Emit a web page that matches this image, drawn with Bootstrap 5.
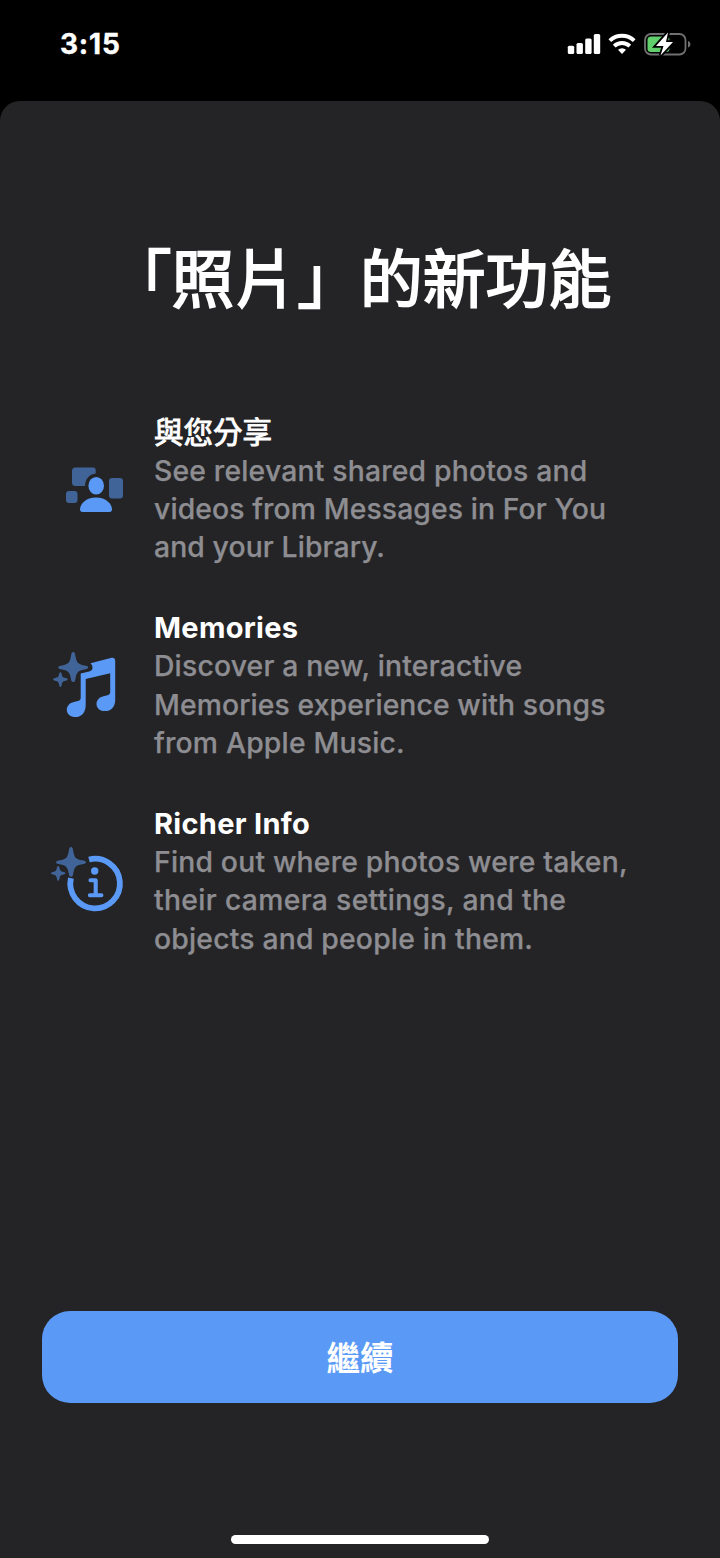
<!DOCTYPE html>
<html lang="zh-Hant" data-bs-theme="dark">
<head>
<meta charset="utf-8">
<meta name="viewport" content="width=device-width, initial-scale=1">
<title>「照片」的新功能</title>
<link rel="stylesheet" href="https://cdn.jsdelivr.net/npm/bootstrap@5.3.0/dist/css/bootstrap.min.css">
<style>
  :root { --accent: #5a9af6; --accent-dim: #416498; --sheet: #242426; }
  body { background: #000; color: #fff; font-family: Inter, "Noto Sans CJK TC", sans-serif; }
  .screen { height: 1558px; overflow: hidden; }
  .status-bar { height: 101px; padding: 0 29px 14px 60px; }
  .clock { font-size: 28px; font-weight: 700; letter-spacing: .8px; line-height: 1; -webkit-text-stroke: .4px #fff; }
  .sheet { background: var(--sheet); border-radius: 20px 20px 0 0; }
  .headline { margin-top: 127px; font: 400 62.800px/94px "Noto Sans CJK TC", sans-serif; -webkit-text-stroke: 1.900px #fff; }
  .features { margin-top: 91.500px; padding-left: 42px; gap: 42.400px; }
  .feature { height: 153.200px; }
  .feature-icon { width: 112px; flex: none; }
  .feature-icon svg { display: block; }
  .feature-text { font-size: 28.300px; line-height: 38.300px; }
  .feature-text h2 { height: 38.300px; font-size: 29px; line-height: 38.300px; font-weight: 700; letter-spacing: .3px; }
  .feature-text .heading-zh { font: 400 29.500px/32.300px "Noto Sans CJK TC", sans-serif; letter-spacing: 0; -webkit-text-stroke: .9px #fff; }
  .feature-text p { color: #8d8d92; font-weight: 500; -webkit-text-stroke: .25px #8d8d92; }
  .feature-text span { display: block; white-space: nowrap; letter-spacing: .2px; }
  .feature-text .snug { letter-spacing: .12px; }
  .feature-text .airy { letter-spacing: .33px; }
  .btn-continue { --bs-btn-bg: var(--accent); --bs-btn-color: #fff; height: 92px; border: 0; border-radius: 28px; font: 700 33.500px/1 "Noto Sans CJK TC", sans-serif; margin: 0 42px 132px; padding: 0 0 3px; }
  .home-bar { width: 258px; height: 9px; margin-bottom: 14px; }
</style>
</head>
<body>
<div class="screen d-flex flex-column">
  <header class="status-bar d-flex align-items-center justify-content-between">
    <div class="clock">3:15</div>
    <svg width="124" height="30" viewBox="567 28 124 30" aria-hidden="true">
      <g fill="#fff">
        <rect x="567.800" y="44.800" width="6.400" height="8.200" rx="1.500"/>
        <rect x="576.500" y="42" width="6.400" height="11" rx="1.500"/>
        <rect x="585.200" y="37.500" width="6.400" height="15.500" rx="1.500"/>
        <rect x="593.800" y="33" width="6.400" height="20" rx="1.500"/>
        <path d="M622 53l-4-4.200a6 6 0 0 1 8 0z"/>
      </g>
      <g fill="none" stroke="#fff" stroke-width="3.900">
        <path d="M609.800 39.600a17.600 17.600 0 0 1 24.400 0"/>
        <path d="M614.200 45.200a11.200 11.200 0 0 1 15.600 0"/>
      </g>
      <rect x="645" y="33" width="40.500" height="20.500" rx="6" fill="none" stroke="#707070" stroke-width="1.800"/>
      <path d="M688 40c3.200.8 3.200 5.700 0 6.500z" fill="#707070"/>
      <rect x="647.500" y="35.500" width="22" height="15.500" rx="3.500" fill="#61cf6b"/>
      <path d="M668 31.500L656 45h7.500l-3 9.500L673 41h-7z" fill="#fff" stroke="#000" stroke-width="3.600" paint-order="stroke"/>
    </svg>
  </header>
  <main class="sheet flex-grow-1 d-flex flex-column">
    <h1 class="headline text-center mb-0">「照片」的新功能</h1>
    <div class="features d-flex flex-column">
      <section class="feature d-flex">
        <div class="feature-icon">
          <svg width="112" height="152" viewBox="42 414 112 152" aria-hidden="true">
            <g fill="#416498">
              <path d="M75.500 467.500h17.500a3 3 0 0 1 2.700 3.300v2.700c-6.500.5-10.700 6-10.700 12.500h-9.500a3.500 3.500 0 0 1-3.500-3.500v-11.500a3.500 3.500 0 0 1 3.500-3.500z"/>
              <rect x="109" y="478" width="14" height="20.500" rx="3"/>
              <rect x="66" y="491" width="11.500" height="12" rx="3"/>
            </g>
            <g fill="#5a9af6">
              <ellipse cx="96.200" cy="485.800" rx="7.800" ry="8.800"/>
              <path d="M82.500 512c-1.500 0-2.500-1-2.500-2.500C80 504 86 497.500 96 497.500s16 6.500 16 12c0 1.500-1 2.500-2.500 2.500z"/>
            </g>
          </svg>
        </div>
        <div class="feature-text">
          <h2 class="heading-zh mb-0">與您分享</h2>
          <p class="mb-0"><span>See relevant shared photos and</span><span class="snug">videos from Messages in For You</span><span class="snug">and your Library.</span></p>
        </div>
      </section>
      <section class="feature d-flex">
        <div class="feature-icon">
          <svg width="112" height="152" viewBox="42 609.100 112 152" aria-hidden="true">
            <path d="M90.500 663.300l20.300-5.200c2.800-.7 4.400.4 4.400 3.200V700c0 7-4.200 11.200-10.200 11.200-5 0-8.500-3.100-8.500-7.200s3.200-7.200 8-8l3-.7c2-.5 2.700-1.300 2.700-3.200V673.300L85.700 679v26c0 7.500-4.400 12.200-10.200 12.200-5 0-8.700-3.300-8.700-7.400s3.200-7.100 8-8l3.200-.8c2-.5 2.700-1.300 2.700-3.200V673.700l8.500-2.100c3.800-.9 4.500-5 1.300-8.300z" fill="#5a9af6"/>
            <g fill="#416498">
              <path d="M73.200 652.200c1.600 0 1.900 2.100 2.200 4 1.200 6.500 2.400 8.200 9 9.400 2 .4 3.800.6 3.800 2s-1.800 1.600-3.800 2c-6.600 1.200-7.800 2.900-9 9.400-.3 1.900-.6 3-2.200 3s-1.900-1.100-2.200-3c-1.200-6.500-2.400-8.200-9-9.400-2-.4-3.800-.6-3.800-2s1.800-1.600 3.800-2c6.600-1.200 7.800-2.900 9-9.400.3-1.900.6-4 2.200-4z" stroke="#242426" stroke-width="2" paint-order="stroke"/>
              <path d="M60.400 672.300c.9 0 1.100.9 1.300 1.800.6 3 1 3.500 4 4.100 1 .2 1.900.5 1.900 1.300s-.9 1.100-1.900 1.300c-3 .6-3.400 1.100-4 4.100-.2.900-.4 2.100-1.300 2.100s-1.100-1.200-1.300-2.100c-.6-3-1-3.500-4-4.100-1-.2-1.900-.5-1.900-1.300s.9-1.100 1.900-1.300c3-.6 3.400-1.100 4-4.100.2-.9.400-1.800 1.300-1.800z"/>
            </g>
          </svg>
        </div>
        <div class="feature-text">
          <h2 class="mb-0">Memories</h2>
          <p class="mb-0"><span>Discover a new, interactive</span><span class="snug">Memories experience with songs</span><span>from Apple Music.</span></p>
        </div>
      </section>
      <section class="feature d-flex">
        <div class="feature-icon">
          <svg width="112" height="152" viewBox="42 805 112 152" aria-hidden="true">
            <path d="M89 859.500A24.800 24.800 0 1 1 70.900 878.200" fill="none" stroke="#5a9af6" stroke-width="5.800"/>
            <circle cx="94.700" cy="871" r="3.700" fill="#5a9af6"/>
            <path d="M90.500 880.200h5.200v15.100M89.900 895.300h11.500" fill="none" stroke="#5a9af6" stroke-width="4.100" stroke-linecap="round" stroke-linejoin="round"/>
            <g fill="#416498" transform="translate(-2.200 194.700)">
              <path d="M73.200 652.200c1.600 0 1.900 2.100 2.200 4 1.200 6.500 2.400 8.200 9 9.400 2 .4 3.800.6 3.800 2s-1.800 1.600-3.800 2c-6.600 1.200-7.800 2.900-9 9.400-.3 1.900-.6 3-2.200 3s-1.900-1.100-2.200-3c-1.200-6.500-2.400-8.200-9-9.400-2-.4-3.800-.6-3.800-2s1.800-1.600 3.800-2c6.600-1.200 7.800-2.900 9-9.400.3-1.900.6-4 2.200-4z" stroke="#242426" stroke-width="2" paint-order="stroke"/>
              <path d="M60.400 671.300c.9 0 1.100.9 1.300 1.800.6 3 1 3.500 4 4.100 1 .2 1.900.5 1.900 1.300s-.9 1.100-1.900 1.300c-3 .6-3.400 1.100-4 4.100-.2.900-.4 2.100-1.300 2.100s-1.100-1.200-1.300-2.100c-.6-3-1-3.500-4-4.100-1-.2-1.900-.5-1.900-1.300s.9-1.100 1.900-1.300c3-.6 3.400-1.100 4-4.100.2-.9.400-1.800 1.300-1.800z"/>
            </g>
          </svg>
        </div>
        <div class="feature-text">
          <h2 class="mb-0">Richer Info</h2>
          <p class="mb-0"><span>Find out where photos were taken,</span><span class="airy">their camera settings, and the</span><span>objects and people in them.</span></p>
        </div>
      </section>
    </div>
    <button type="button" class="btn btn-continue mt-auto">繼續</button>
    <div class="home-bar bg-white rounded-pill mx-auto"></div>
  </main>
</div>
<script src="https://cdn.jsdelivr.net/npm/bootstrap@5.3.0/dist/js/bootstrap.bundle.min.js"></script>
</body>
</html>
